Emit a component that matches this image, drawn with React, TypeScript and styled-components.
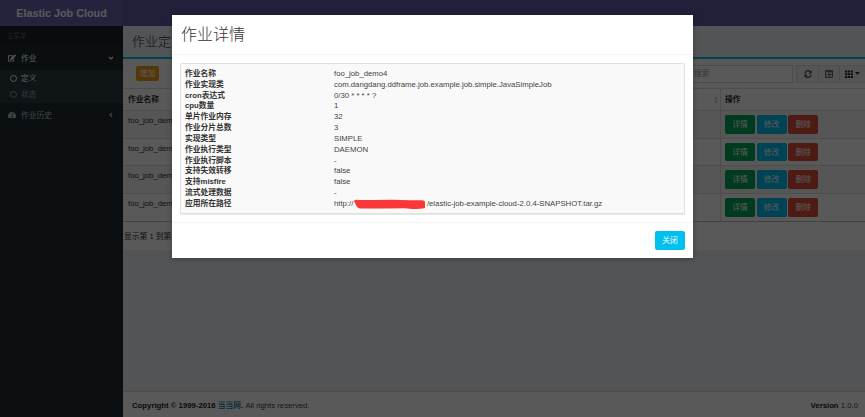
import React from "react";
import styled, { createGlobalStyle } from "styled-components";
import { FaEdit, FaTachometerAlt } from "react-icons/fa";

const Global = createGlobalStyle`
  * { box-sizing: border-box; }
  body { margin: 0; overflow: hidden; }
`;

const Page = styled.div`
  position: relative;
  width: 865px;
  height: 417px;
  overflow: hidden;
  display: flex;
  flex-direction: column;
  background: #ecf0f5;
  color: #333;
  font: 7.75px/11px "Liberation Sans", "Noto Sans CJK SC", sans-serif;
  white-space: nowrap;
`;
const Header = styled.header`
  display: flex;
  flex: 0 0 26px;
  background: #605ca8;
`;
const Brand = styled.div`
  width: 123px;
  background: #6964af;
  color: #fff;
  font-weight: bold;
  font-size: 10.8px;
  line-height: 26px;
  text-align: center;
`;
const Body = styled.div`
  display: flex;
  flex: 1;
  min-height: 0;
`;
const Sidebar = styled.nav`
  width: 123px;
  background: #222d32;
`;
const MenuLabel = styled.div`
  height: 20px;
  padding-left: 7px;
  background: #1a2226;
  color: #4b646f;
  font-size: 6.5px;
  line-height: 20px;
`;
const MenuItem = styled.div<{ $active?: boolean }>`
  display: flex;
  align-items: center;
  height: 24px;
  padding: 0 9px 0 8px;
  gap: 5px;
  background: ${(p) => (p.$active ? "#1e282c" : "transparent")};
  color: ${(p) => (p.$active ? "#fff" : "#b8c7ce")};
  span { flex: 1; }
`;
const SubMenu = styled.div`
  height: 33px;
  background: #2c3b41;
`;
const SubItem = styled.div<{ $active?: boolean }>`
  display: flex;
  align-items: center;
  gap: 4px;
  height: 16.3px;
  padding-left: 10px;
  color: ${(p) => (p.$active ? "#fff" : "#8aa4af")};
`;
const Ring = styled.i`
  width: 7px;
  height: 7px;
  border: 1.5px solid currentColor;
  border-radius: 50%;
`;
const Main = styled.main`
  flex: 1;
  min-width: 0;
  display: flex;
  flex-direction: column;
`;
const PageTitle = styled.h1`
  height: 31px;
  margin: 0;
  padding-left: 9px;
  font-size: 13px;
  font-weight: 300;
  line-height: 31px;
`;
const Box = styled.section`
  height: 193px;
  border-top: 2px solid #00c0ef;
  background: #fff;
`;
const Toolbar = styled.div`
  display: flex;
  align-items: center;
  height: 29px;
  padding: 0 0 0 13px;
`;
const Button = styled.button<{ $color: string; $small?: boolean }>`
  width: ${(p) => (p.$small ? 23 : 30)}px;
  height: ${(p) => (p.$small ? 15 : 18.5)}px;
  padding: 0;
  border: 0;
  border-radius: 2px;
  background: ${(p) => p.$color};
  color: #fff;
  font: inherit;
`;
const Search = styled.div`
  width: 250px;
  height: 18px;
  margin-left: auto;
  padding-left: 150px;
  border: 1px solid #d2d6de;
  color: #999;
  line-height: 15px;
`;
const ToolGroup = styled.div`
  display: flex;
  height: 18px;
  width: 69px;
  margin-left: 3px;
  border: 1px solid #ddd;
  border-right: 0;
  background: #f4f4f4;
`;
const Tool = styled.div`
  display: flex;
  flex: 0 0 21px;
  align-items: center;
  justify-content: center;
  gap: 2px;
  color: #333;
  & + & { border-left: 1px solid #ddd; }
  &:last-child { flex: 1; }
`;
const Row = styled.div<{ $head?: boolean; $odd?: boolean }>`
  display: grid;
  grid-template-columns: 598px 1fr;
  height: ${(p) => (p.$head ? 22 : 27.7)}px;
  border-top: 1px solid #ddd;
  background: ${(p) => (p.$odd ? "#f5f5f5" : "#fff")};
  font-weight: ${(p) => (p.$head ? "bold" : "normal")};
`;
const Cell = styled.div<{ $head?: boolean }>`
  display: flex;
  align-items: ${(p) => (p.$head ? "center" : "flex-start")};
  justify-content: space-between;
  padding: ${(p) => (p.$head ? "0 2px 0 5px" : "4px 3px 0 5px")};
  border-right: 1px solid #ddd;
`;
const Actions = styled.div`
  display: flex;
  align-items: center;
  gap: 1.6px;
  padding-left: 4px;
`;
const Paging = styled.div`
  height: 29px;
  padding-left: 1px;
  border-top: 1px solid #bbb;
  line-height: 29px;
`;
const Footer = styled.footer`
  display: flex;
  justify-content: space-between;
  height: 26px;
  margin-top: auto;
  padding: 0 7px 0 9px;
  border-top: 1px solid #d2d6de;
  background: #fff;
  color: #444;
  line-height: 27px;
  a { color: #3c8dbc; }
  b { color: #222; }
`;
const Backdrop = styled.div`
  position: absolute;
  inset: 0;
  display: flex;
  align-items: flex-start;
  padding: 15px 0 0 172px;
  background: rgba(0, 0, 0, 0.65);
`;
const Dialog = styled.div`
  width: 521px;
  height: 243px;
  background: #fff;
  box-shadow: 0 1px 5px rgba(0, 0, 0, 0.3);
`;
const DialogTitle = styled.h2`
  height: 40px;
  margin: 0;
  padding-left: 9px;
  border-bottom: 1px solid #f4f4f4;
  font-size: 16px;
  font-weight: 300;
  line-height: 40px;
`;
const Well = styled.dl`
  width: 505px;
  height: 151px;
  margin: 8px;
  padding: 4px 4px;
  border: 1px solid #e0e0e0;
  border-radius: 2px;
  background: #f9f9f9;
  box-shadow: 0 1px 1px rgba(0, 0, 0, 0.1);
`;
const Detail = styled.div`
  display: grid;
  grid-template-columns: 149px 1fr;
  height: 10.83px;
  dt { font-weight: bold; }
  dd { margin: 0; display: flex; align-items: flex-start; color: #444; }
`;
const DialogFooter = styled.div`
  display: flex;
  justify-content: flex-end;
  padding: 8px 8px 0;
  border-top: 1px solid #f4f4f4;
`;

const Redaction = () => (
  <svg width="73.5" height="11" viewBox="0 0 75 11" preserveAspectRatio="none">
    <path d="M1 3 Q2 1 6 2 L20 2 L40 1.8 L58 2.2 L71 2.2 Q74 3 73.5 5 L73.5 10 Q70 11 60 11 L53 10.3 L35 10.6 L8 10.6 Q4 10 3 7 Z" fill="#fb3838" />
  </svg>
);
const Chevron = ({ down }: { down?: boolean }) => (
  <svg width="6" height="6" viewBox="0 0 6 6" fill="none" stroke="currentColor" strokeWidth="1.1">
    <path d={down ? "M1 2L3 4L5 2" : "M4 1L2 3L4 5"} />
  </svg>
);
const Refresh = () => (
  <svg width="8" height="8" viewBox="0 0 16 16" fill="none" stroke="currentColor" strokeWidth="2.2">
    <path d="M2 7a6 6 0 0 1 11-3M14 9a6 6 0 0 1-11 3" />
    <path d="M15 1v6H9zM1 15V9h6z" fill="currentColor" stroke="none" />
  </svg>
);
const ListIcon = () => (
  <svg width="8" height="8" viewBox="0 0 16 16" fill="none" stroke="currentColor" strokeWidth="1.4">
    <path d="M1 1h14v14H1zM1 3h14M3 6h2M3 9h2M3 12h2M6 6h7M6 9h7M6 12h7" />
  </svg>
);
const GridIcon = () => (
  <svg width="8" height="8" viewBox="0 0 16 16" fill="currentColor">
    <path d="M0 1h4.5v4H0zM5.7 1h4.5v4H5.7zM11.5 1H16v4h-4.500zM0 6.500h4.500v4H0zM5.700 6.500h4.500v4H5.700zM11.500 6.500H16v4h-4.500zM0 12h4.500v4H0zM5.700 12h4.500v4H5.700zM11.500 12H16v4h-4.500z" />
  </svg>
);
const Caret = () => (
  <svg width="5" height="3" viewBox="0 0 5 3"><path d="M0 0h5L2.5 3z" fill="currentColor" /></svg>
);
const Sort = () => (
  <svg width="4" height="8" viewBox="0 0 4 8"><path d="M0 3.4L2 0 4 3.4zM0 4.6h4L2 8z" fill="#ccc" /></svg>
);

const details: [string, React.ReactNode][] = [
  ["作业名称", "foo_job_demo4"],
  ["作业实现类", "com.dangdang.ddframe.job.example.job.simple.JavaSimpleJob"],
  ["cron表达式", "0/30 * * * * ?"],
  ["cpu数量", "1"],
  ["单片作业内存", "32"],
  ["作业分片总数", "3"],
  ["实现类型", "SIMPLE"],
  ["作业执行类型", "DAEMON"],
  ["作业执行脚本", "-"],
  ["支持失效转移", "false"],
  ["支持misfire", "false"],
  ["流式处理数据", "-"],
  ["应用所在路径", <>http://<Redaction />/elastic-job-example-cloud-2.0.4-SNAPSHOT.tar.gz</>],
];
const jobs = ["foo_job_demo1", "foo_job_demo2", "foo_job_demo3", "foo_job_demo4"];

export default function App() {
  return (
    <Page>
      <Global />
      <Header><Brand>Elastic Job Cloud</Brand></Header>
      <Body>
        <Sidebar>
          <MenuLabel>主菜单</MenuLabel>
          <MenuItem $active><FaEdit size={8} /><span>作业</span><Chevron down /></MenuItem>
          <SubMenu>
            <SubItem $active><Ring />定义</SubItem>
            <SubItem><Ring />状态</SubItem>
          </SubMenu>
          <MenuItem><FaTachometerAlt size={8} /><span>作业历史</span><Chevron /></MenuItem>
        </Sidebar>
        <Main>
          <PageTitle>作业定义</PageTitle>
          <Box>
            <Toolbar>
              <Button $color="#f39c12" $small>增加</Button>
              <Search>搜索</Search>
              <ToolGroup>
                <Tool><Refresh /></Tool>
                <Tool><ListIcon /></Tool>
                <Tool><GridIcon /><Caret /></Tool>
              </ToolGroup>
            </Toolbar>
            <Row $head>
              <Cell $head>作业名称<Sort /></Cell>
              <Actions>操作</Actions>
            </Row>
            {jobs.map((job, i) => (
              <Row key={job} $odd={i % 2 === 0}>
                <Cell>{job}</Cell>
                <Actions>
                  <Button $color="#00a65a">详情</Button>
                  <Button $color="#00c0ef">修改</Button>
                  <Button $color="#dd4b39">删除</Button>
                </Actions>
              </Row>
            ))}
            <Paging>显示第 1 到第 4 条记录，总共 4 条记录</Paging>
          </Box>
          <Footer>
            <span><b>Copyright © 1999-2016 <a>当当网</a>.</b> All rights reserved.</span>
            <span><b>Version</b> 1.0.0</span>
          </Footer>
        </Main>
      </Body>
      <Backdrop>
        <Dialog>
          <DialogTitle>作业详情</DialogTitle>
          <Well>
            {details.map(([label, value]) => (
              <Detail key={label}><dt>{label}</dt><dd>{value}</dd></Detail>
            ))}
          </Well>
          <DialogFooter><Button $color="#00c0ef">关闭</Button></DialogFooter>
        </Dialog>
      </Backdrop>
    </Page>
  );
}
